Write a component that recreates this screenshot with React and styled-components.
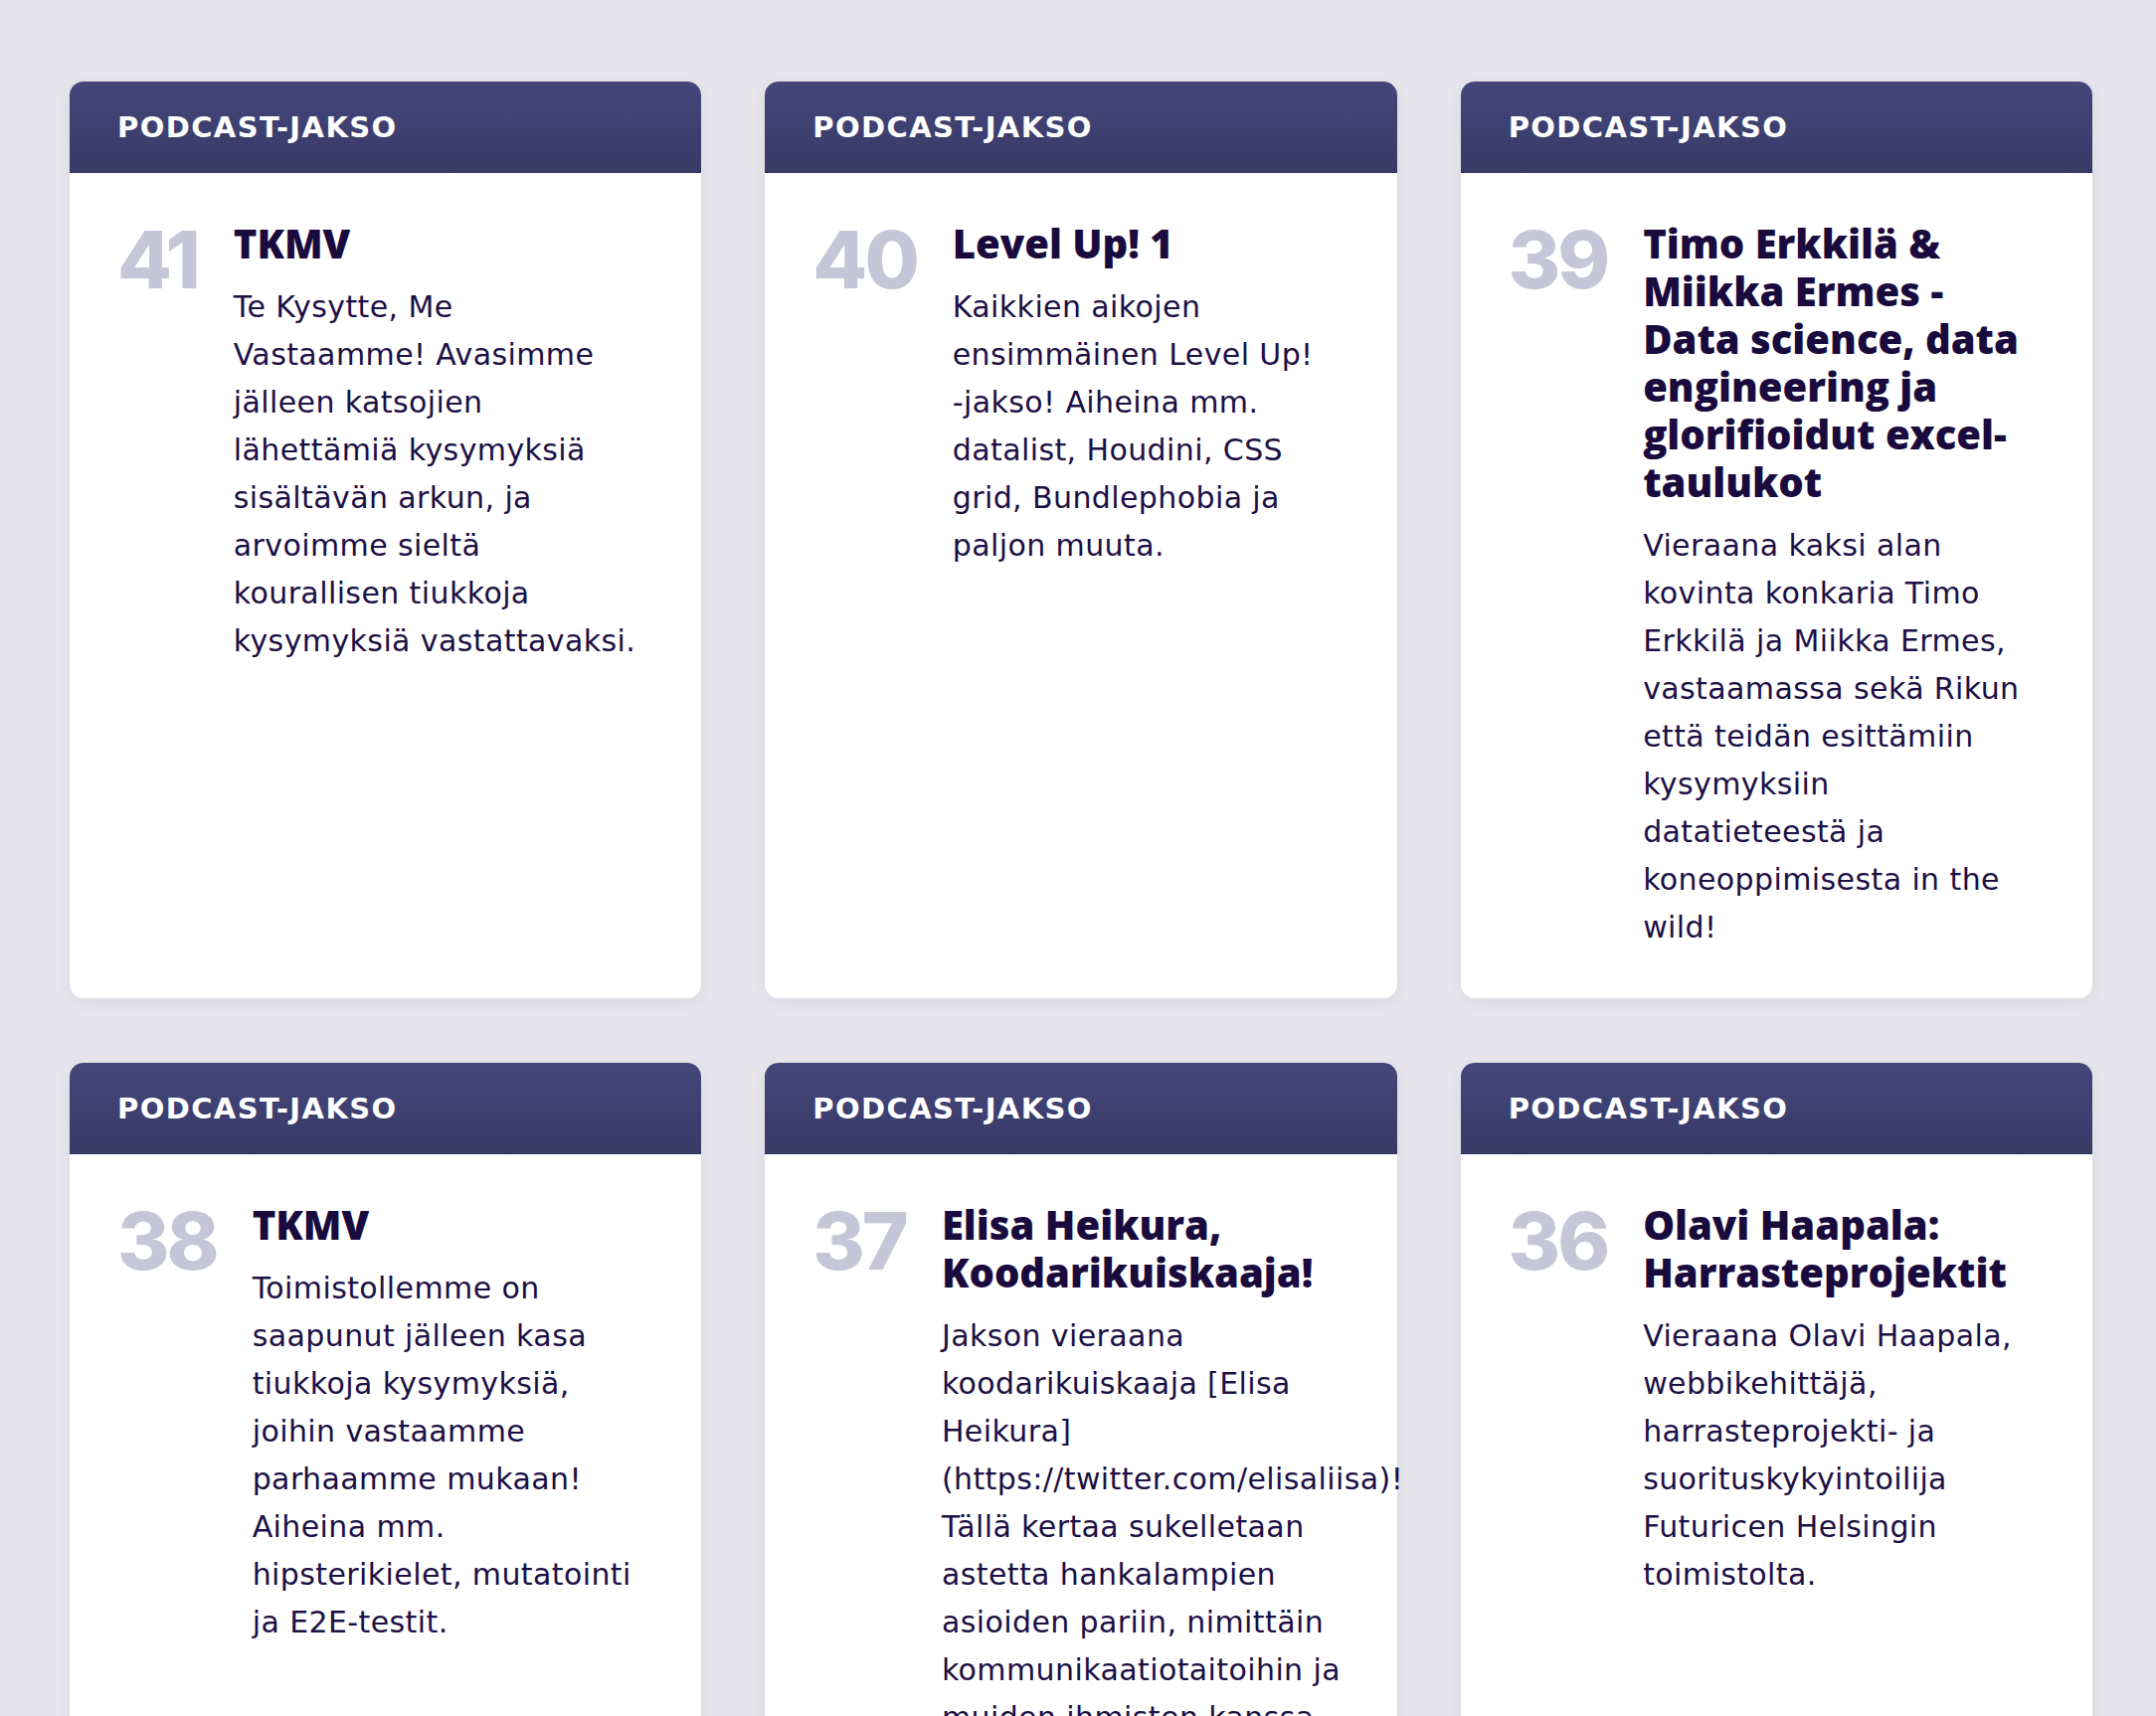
import React from "react";
import styled, { createGlobalStyle } from "styled-components";

const GlobalStyle = createGlobalStyle`
  html, body {
    margin: 0;
    padding: 0;
    background: #e6e5eb;
  }
  * { box-sizing: border-box; }
`;

const Grid = styled.main`
  display: grid;
  grid-template-columns: repeat(3, minmax(0, 1fr));
  column-gap: 64px;
  row-gap: 65px;
  padding: 82px 64px 0 70px;
  min-height: 1726px;
  align-items: stretch;
`;

const Card = styled.article`
  background: #ffffff;
  border-radius: 14px;
  box-shadow: 0 4px 18px rgba(40, 40, 90, 0.06);
  display: flex;
  flex-direction: column;
  min-width: 0;
`;

const CardHeader = styled.header`
  height: 92px;
  display: flex;
  align-items: center;
  padding: 0 48px;
  border-radius: 14px 14px 0 0;
  background: linear-gradient(180deg, #43477b 0%, #383a66 100%);
`;

const Label = styled.span`
  font-family: "DejaVu Sans", sans-serif;
  font-weight: 700;
  font-size: 29px;
  letter-spacing: 1.4px;
  color: #ffffff;
  text-transform: uppercase;
`;

const Body = styled.div`
  display: flex;
  align-items: flex-start;
  padding: 47px 48px 47px 48px;
`;

const Number = styled.span`
  font-family: Inter, sans-serif;
  font-weight: 800;
  font-size: 80px;
  line-height: 1;
  letter-spacing: -3px;
  color: #c5c6d7;
  margin-right: 36px;
  flex: none;
`;

const Content = styled.div`
  flex: 1;
  min-width: 0;
`;

const Title = styled.h2`
  margin: 0 0 16px;
  font-family: "Open Sans", sans-serif;
  font-weight: 800;
  font-size: 40px;
  line-height: 48px;
  color: #1a0b3e;
  white-space: pre-line;
`;

const Description = styled.p`
  margin: 0;
  font-family: "DejaVu Sans", sans-serif;
  font-weight: 400;
  font-size: 30px;
  line-height: 48px;
  letter-spacing: 0.4px;
  color: #1c1045;
  white-space: pre-line;
`;

const episodes = [
  {
    n: 41,
    title: "TKMV",
    text: "Te Kysytte, Me\nVastaamme! Avasimme\njälleen katsojien\nlähettämiä kysymyksiä\nsisältävän arkun, ja\narvoimme sieltä\nkourallisen tiukkoja\nkysymyksiä vastattavaksi.",
  },
  {
    n: 40,
    title: "Level Up! 1",
    text: "Kaikkien aikojen\nensimmäinen Level Up!\n-jakso! Aiheina mm.\ndatalist, Houdini, CSS\ngrid, Bundlephobia ja\npaljon muuta.",
  },
  {
    n: 39,
    title: "Timo Erkkilä &\nMiikka Ermes -\nData science, data\nengineering ja\nglorifioidut excel-\ntaulukot",
    text: "Vieraana kaksi alan\nkovinta konkaria Timo\nErkkilä ja Miikka Ermes,\nvastaamassa sekä Rikun\nettä teidän esittämiin\nkysymyksiin\ndatatieteestä ja\nkoneoppimisesta in the\nwild!",
  },
  {
    n: 38,
    title: "TKMV",
    text: "Toimistollemme on\nsaapunut jälleen kasa\ntiukkoja kysymyksiä,\njoihin vastaamme\nparhaamme mukaan!\nAiheina mm.\nhipsterikielet, mutatointi\nja E2E-testit.",
  },
  {
    n: 37,
    title: "Elisa Heikura,\nKoodarikuiskaaja!",
    text: "Jakson vieraana\nkoodarikuiskaaja [Elisa\nHeikura]\n(https://twitter.com/elisaliisa)!\nTällä kertaa sukelletaan\nastetta hankalampien\nasioiden pariin, nimittäin\nkommunikaatiotaitoihin ja\nmuiden ihmisten kanssa\ntoimimiseen.",
  },
  {
    n: 36,
    title: "Olavi Haapala:\nHarrasteprojektit",
    text: "Vieraana Olavi Haapala,\nwebbikehittäjä,\nharrasteprojekti- ja\nsuorituskykyintoilija\nFuturicen Helsingin\ntoimistolta.",
  },
];

export default function App() {
  return (
    <>
      <GlobalStyle />
      <Grid>
        {episodes.map((ep) => (
          <Card key={ep.n}>
            <CardHeader>
              <Label>Podcast-jakso</Label>
            </CardHeader>
            <Body>
              <Number>{ep.n}</Number>
              <Content>
                <Title>{ep.title}</Title>
                <Description>{ep.text}</Description>
              </Content>
            </Body>
          </Card>
        ))}
      </Grid>
    </>
  );
}
